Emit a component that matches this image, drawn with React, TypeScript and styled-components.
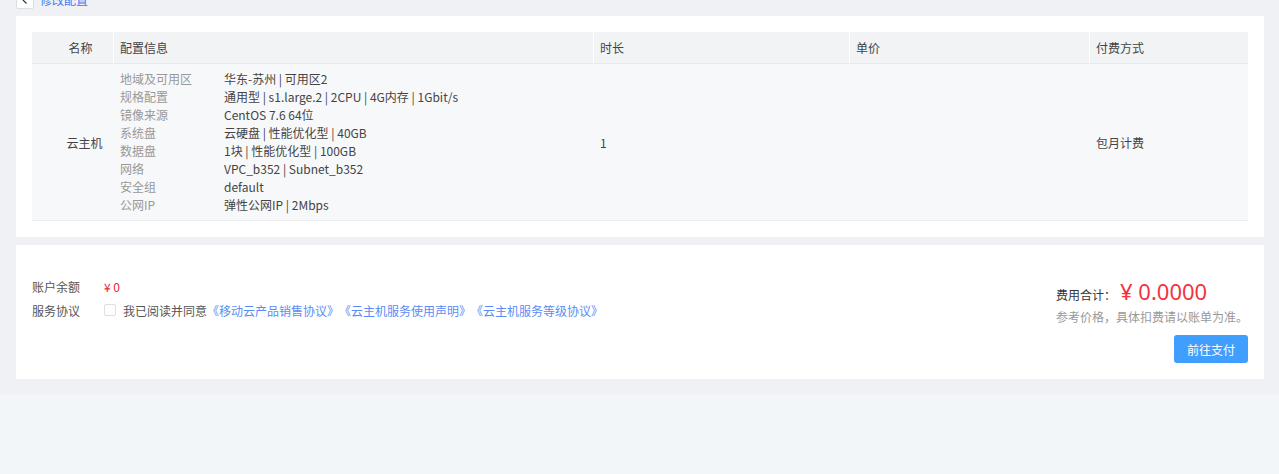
import React from "react";
import styled, { createGlobalStyle } from "styled-components";

const GlobalStyle = createGlobalStyle`
  html, body {
    margin: 0;
    padding: 0;
    background: #f3f6f9;
    font-family: "Noto Sans CJK SC", "Noto Sans", sans-serif;
    font-size: 12px;
    color: #333;
  }
  * { box-sizing: border-box; }
`;

const Page = styled.div`
  background: #f0f1f5;
  padding: 0 15px 16px 16px;
  overflow: hidden;
`;

const TopBar = styled.div`
  display: flex;
  align-items: center;
  gap: 6px;
  height: 18px;
  margin-top: -9px;
  margin-bottom: 7px;
`;

const BackButton = styled.button`
  width: 18px;
  height: 18px;
  padding: 0;
  border: 1px solid #dcdfe6;
  border-radius: 2px;
  background: #fff;
  display: flex;
  align-items: center;
  justify-content: center;
  color: #333;
`;

const BackLink = styled.a`
  color: #3d7bf5;
  font-size: 12px;
  line-height: 18px;
  text-decoration: none;
`;

const Card = styled.section<{ $pad: string }>`
  background: #fff;
  padding: ${(p) => p.$pad};
  & + & {
    margin-top: 8px;
  }
`;

const Table = styled.div`
  display: grid;
  grid-template-columns: 81px 480px 256px 240px 1fr;
`;

const HeadCell = styled.div<{ $first?: boolean }>`
  background: #f2f3f5;
  height: 32px;
  line-height: 31px;
  border-bottom: 1px solid #e8eaee;
  border-left: ${(p) => (p.$first ? "none" : "1px solid #fff")};
  padding: ${(p) => (p.$first ? "0 0 0 16px" : "0 6px")};
  text-align: ${(p) => (p.$first ? "center" : "left")};
  color: #444;
  font-size: 12px;
`;

const BodyCell = styled.div<{ $first?: boolean }>`
  background: #f7f8fa;
  border-bottom: 1px solid #ebedf0;
  padding: ${(p) => (p.$first ? "6px 0 6px 24px" : "6px 7px")};
  display: flex;
  align-items: center;
  justify-content: ${(p) => (p.$first ? "center" : "flex-start")};
  color: #444;
  font-size: 12px;
`;

const ConfigList = styled.div`
  display: grid;
  grid-template-columns: 104px 1fr;
  width: 100%;
`;

const ConfigLabel = styled.div`
  color: #999;
  line-height: 18px;
  white-space: nowrap;
`;

const ConfigValue = styled.div`
  color: #444;
  line-height: 18px;
  white-space: nowrap;
`;

const Footer = styled.div`
  display: flex;
  justify-content: space-between;
  align-items: flex-start;
`;

const InfoList = styled.div`
  display: flex;
  flex-direction: column;
  gap: 6px;
`;

const InfoRow = styled.div`
  display: flex;
  align-items: center;
  height: 18px;
`;

const InfoLabel = styled.div`
  width: 72px;
  color: #555;
`;

const Balance = styled.span`
  color: #f5222d;
`;

const Checkbox = styled.span`
  width: 12px;
  height: 12px;
  border: 1px solid #dcdfe6;
  border-radius: 2px;
  background: #fff;
  margin-right: 7px;
  display: inline-block;
`;

const AgreeText = styled.span`
  color: #555;
`;

const AgreeLink = styled.a`
  color: #5b8cf5;
  text-decoration: none;
`;

const Summary = styled.div`
  width: 192px;
  display: flex;
  flex-direction: column;
  align-items: flex-start;
`;

const TotalRow = styled.div`
  display: flex;
  align-items: center;
  height: 28px;
  gap: 4px;
`;

const TotalLabel = styled.span`
  color: #333;
  font-size: 12px;
  margin-top: 6px;
`;

const TotalValue = styled.span`
  color: #f5333f;
  font-family: "Noto Sans", "Noto Sans CJK SC", sans-serif;
  font-size: 22px;
  line-height: 28px;
`;

const Note = styled.div`
  color: #999;
  font-size: 12px;
  line-height: 18px;
  margin-top: 3px;
  white-space: nowrap;
`;

const PayButton = styled.button`
  align-self: flex-end;
  margin-top: 9px;
  width: 74px;
  height: 28px;
  border: none;
  border-radius: 3px;
  background: #409eff;
  color: #fff;
  font-family: inherit;
  font-size: 12px;
  cursor: pointer;
`;

const config: [string, string][] = [
  ["地域及可用区", "华东-苏州 | 可用区2"],
  ["规格配置", "通用型 | s1.large.2 | 2CPU | 4G内存 | 1Gbit/s"],
  ["镜像来源", "CentOS 7.6 64位"],
  ["系统盘", "云硬盘 | 性能优化型 | 40GB"],
  ["数据盘", "1块 | 性能优化型 | 100GB"],
  ["网络", "VPC_b352 | Subnet_b352"],
  ["安全组", "default"],
  ["公网IP", "弹性公网IP | 2Mbps"],
];

export default function App() {
  return (
    <>
      <GlobalStyle />
      <Page>
        <TopBar>
          <BackButton aria-label="返回">
            <svg width="10" height="10" viewBox="0 0 10 10" fill="none">
              <path d="M6.5 1.5L3 5l3.5 3.5" stroke="#333" strokeWidth="1.2" />
            </svg>
          </BackButton>
          <BackLink href="#">修改配置</BackLink>
        </TopBar>

        <Card $pad="16px 16px 16px 16px">
          <Table>
            <HeadCell $first>名称</HeadCell>
            <HeadCell>配置信息</HeadCell>
            <HeadCell>时长</HeadCell>
            <HeadCell>单价</HeadCell>
            <HeadCell>付费方式</HeadCell>

            <BodyCell $first>云主机</BodyCell>
            <BodyCell>
              <ConfigList>
                {config.map(([k, v]) => (
                  <React.Fragment key={k}>
                    <ConfigLabel>{k}</ConfigLabel>
                    <ConfigValue>{v}</ConfigValue>
                  </React.Fragment>
                ))}
              </ConfigList>
            </BodyCell>
            <BodyCell>1</BodyCell>
            <BodyCell></BodyCell>
            <BodyCell>包月计费</BodyCell>
          </Table>
        </Card>

        <Card $pad="32px 16px 16px 16px">
          <Footer>
            <InfoList>
              <InfoRow>
                <InfoLabel>账户余额</InfoLabel>
                <Balance>¥ 0</Balance>
              </InfoRow>
              <InfoRow>
                <InfoLabel>服务协议</InfoLabel>
                <Checkbox />
                <AgreeText>我已阅读并同意</AgreeText>
                <AgreeLink href="#">《移动云产品销售协议》</AgreeLink>
                <AgreeLink href="#">《云主机服务使用声明》</AgreeLink>
                <AgreeLink href="#">《云主机服务等级协议》</AgreeLink>
              </InfoRow>
            </InfoList>
            <Summary>
              <TotalRow>
                <TotalLabel>费用合计：</TotalLabel>
                <TotalValue>¥ 0.0000</TotalValue>
              </TotalRow>
              <Note>参考价格，具体扣费请以账单为准。</Note>
              <PayButton>前往支付</PayButton>
            </Summary>
          </Footer>
        </Card>
      </Page>
    </>
  );
}
